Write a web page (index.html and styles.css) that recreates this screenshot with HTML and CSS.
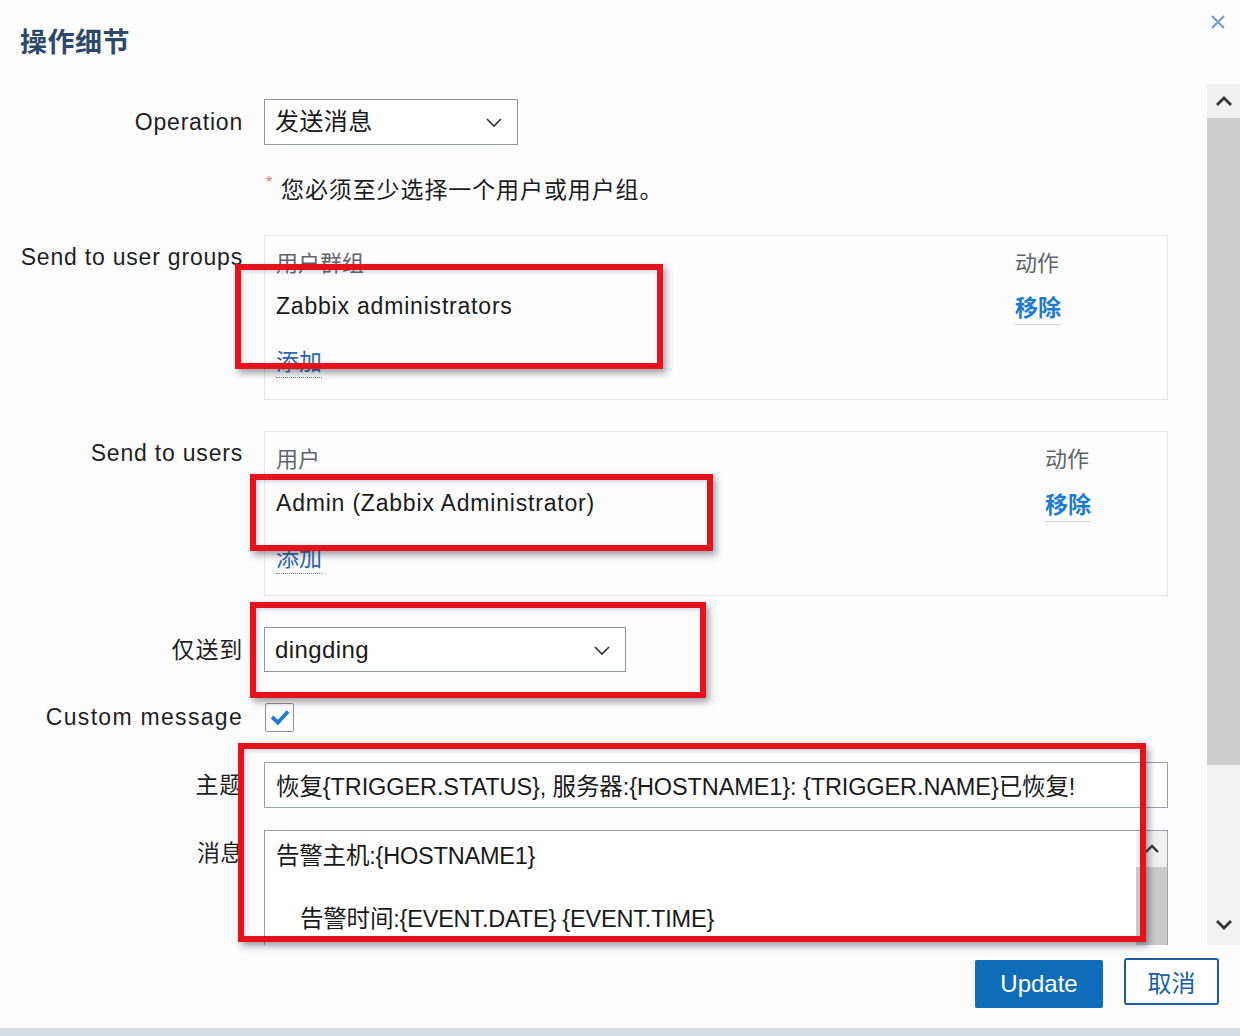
FILE: index.html
```html
<!DOCTYPE html>
<html lang="zh-CN">
<head>
<meta charset="utf-8">
<title>操作细节</title>
<link rel="stylesheet" href="styles.css">
</head>
<body>
<div class="dialog">
  <header class="header">
    <h1 class="title">操作细节</h1>
    <span class="close" aria-label="close">
      <svg width="16" height="16" viewBox="0 0 16 16"><path d="M2 2 L14 14 M14 2 L2 14" stroke="#7f9fc3" stroke-width="2.4" fill="none"/></svg>
    </span>
  </header>

  <div class="main">
    <div class="content">
      <div class="row row-op">
        <label class="lbl">Operation</label>
        <div class="select select-op">
          <span class="select-text">发送消息</span>
          <svg class="chev" width="18" height="12" viewBox="0 0 18 12"><path d="M2 3 L9 10 L16 3" stroke="#333" stroke-width="1.6" fill="none"/></svg>
        </div>
      </div>

      <div class="row row-err">
        <span></span>
        <div class="err"><span class="ast">*</span><span class="err-text">您必须至少选择一个用户或用户组。</span></div>
      </div>

      <div class="row row-table">
        <label class="lbl lbl-top">Send to user groups</label>
        <div class="tbl tbl-groups">
          <div class="th">用户群组</div><div class="th">动作</div>
          <div class="td">Zabbix administrators</div><div class="td"><a class="remove">移除</a></div>
          <div class="td add-cell"><a class="add">添加</a></div>
        </div>
      </div>

      <div class="row row-table row-users">
        <label class="lbl lbl-top">Send to users</label>
        <div class="tbl tbl-users">
          <div class="th">用户</div><div class="th">动作</div>
          <div class="td">Admin (Zabbix Administrator)</div><div class="td"><a class="remove">移除</a></div>
          <div class="td add-cell"><a class="add">添加</a></div>
        </div>
      </div>

      <div class="row row-only">
        <label class="lbl">仅送到</label>
        <div class="select select-only">
          <span class="select-text">dingding</span>
          <svg class="chev" width="18" height="12" viewBox="0 0 18 12"><path d="M2 3 L9 10 L16 3" stroke="#333" stroke-width="1.6" fill="none"/></svg>
        </div>
      </div>

      <div class="row row-check">
        <label class="lbl lbl-wide">Custom message</label>
        <div class="check">
          <svg width="22" height="18" viewBox="0 0 22 18"><path d="M3 9 L9 14.5 L19 3.5" stroke="#1f7ad6" stroke-width="3.8" fill="none" stroke-linejoin="miter"/></svg>
        </div>
      </div>

      <div class="row row-subject">
        <label class="lbl">主题</label>
        <div class="input">恢复{TRIGGER.STATUS}, 服务器:{HOSTNAME1}: {TRIGGER.NAME}已恢复!</div>
      </div>

      <div class="row row-msg">
        <label class="lbl lbl-msg">消息</label>
        <div class="textarea">
          <div class="ta-text">
            <div class="ta-line">告警主机:{HOSTNAME1}</div>
            <div class="ta-line">&nbsp;</div>
            <div class="ta-line ta-indent">告警时间:{EVENT.DATE} {EVENT.TIME}</div>
          </div>
          <div class="ta-scroll">
            <div class="ta-up">
              <svg width="16" height="10" viewBox="0 0 16 10"><path d="M2 8 L8 2 L14 8" stroke="#333" stroke-width="2.4" fill="none"/></svg>
            </div>
            <div class="ta-thumb"></div>
          </div>
        </div>
      </div>
    </div>

    <div class="vscroll">
      <div class="vs-up">
        <svg width="18" height="12" viewBox="0 0 18 12"><path d="M2 10 L9 3 L16 10" stroke="#333" stroke-width="2.8" fill="none"/></svg>
      </div>
      <div class="vs-thumb"></div>
      <div class="vs-track">
        <svg width="18" height="12" viewBox="0 0 18 12"><path d="M2 2 L9 9 L16 2" stroke="#333" stroke-width="2.8" fill="none"/></svg>
      </div>
    </div>
  </div>

  <footer class="footer">
    <button class="btn btn-primary">Update</button>
    <button class="btn btn-cancel">取消</button>
  </footer>
  <div class="strip"></div>

  <div class="annot annot-1"></div>
  <div class="annot annot-2"></div>
  <div class="annot annot-3"></div>
  <div class="annot annot-4"></div>
</div>
</body>
</html>
```

FILE: styles.css
```css
* { box-sizing: border-box; }

html, body {
  margin: 0;
  padding: 0;
}

body {
  background: #fdfdfe;
  color: #1c1c1c;
  font-family: "Liberation Sans", "Noto Sans CJK SC", sans-serif;
}

.dialog {
  position: relative;
  width: 1240px;
  height: 1036px;
  overflow: hidden;
  display: flex;
  flex-direction: column;
  background: #fdfdfe;
}

/* header */
.header {
  height: 84px;
  display: flex;
  justify-content: space-between;
  align-items: flex-start;
  padding: 0 14px 0 20px;
}

.title {
  margin: 23px 0 0 0;
  font-family: "Noto Sans CJK SC", sans-serif;
  font-size: 27px;
  line-height: 36px;
  font-weight: 700;
  color: #2d4868;
  letter-spacing: 0.5px;
}

.close {
  margin-top: 14px;
  display: block;
  width: 16px;
  height: 16px;
}

.close svg { display: block; }

/* main */
.main {
  height: 861px;
  display: flex;
}

.content {
  width: 1207px;
  overflow: hidden;
}

.row {
  display: grid;
  grid-template-columns: 243px auto;
  column-gap: 21px;
  align-items: center;
}

.lbl {
  text-align: right;
  font-size: 23px;
  line-height: 30px;
  letter-spacing: 0.8px;
  color: #1f1f1f;
  white-space: nowrap;
  font-family: "Liberation Sans", "Noto Sans CJK SC", sans-serif;
}

.lbl-wide { letter-spacing: 1.3px; }

.lbl-top {
  align-self: start;
  padding-top: 7px;
}

.lbl-msg {
  align-self: start;
  padding-top: 8px;
  letter-spacing: 0;
}

.row-op { margin-top: 15px; height: 46px; }
.row-err { margin-top: 25px; height: 36px; }
.row-table { margin-top: 29px; align-items: start; }
.row-users { margin-top: 31px; }
.row-only { margin-top: 31px; height: 45px; }
.row-check { margin-top: 30px; height: 29px; }
.row-subject { margin-top: 31px; height: 46px; }
.row-msg { margin-top: 22px; align-items: start; }

/* select */
.select {
  height: 100%;
  border: 1px solid #8e949b;
  background: #ffffff;
  display: flex;
  align-items: center;
  justify-content: space-between;
  padding: 0 14px 0 10px;
}

.select-op { width: 254px; }
.select-only { width: 362px; }

.select-text {
  font-size: 24px;
  line-height: 30px;
  letter-spacing: 0.4px;
  color: #1a1a1a;
}

.chev { display: block; }

/* error */
.err {
  display: flex;
  align-items: center;
  padding-left: 2px;
}

.ast {
  color: #ea7575;
  font-size: 16px;
  line-height: 16px;
  margin-top: -10px;
  width: 15px;
}

.err-text {
  font-family: "Noto Sans CJK SC", sans-serif;
  font-size: 23px;
  line-height: 32px;
  letter-spacing: 0.9px;
  color: #1c1c1c;
}

/* tables */
.tbl {
  width: 904px;
  height: 165px;
  border: 1px solid #e2e5e9;
  background: #fdfdfe;
  padding: 10px 12px 0 11px;
  display: grid;
  align-content: start;
  row-gap: 0;
}

.tbl-groups { grid-template-columns: 739px auto; grid-template-rows: 30px 32px 32px; }
.tbl-users { grid-template-columns: 769px auto; grid-template-rows: 30px 32px 32px; }

.tbl .th {
  font-family: "Noto Sans CJK SC", sans-serif;
  font-size: 22px;
  line-height: 30px;
  color: #5f656c;
}

.tbl .td {
  font-size: 23px;
  line-height: 32px;
  letter-spacing: 0.8px;
  color: #1a1a1a;
  margin-top: 14px;
}

.tbl-users .td { margin-top: 15px; }

.tbl .add-cell {
  grid-column: 1 / 3;
  margin-top: 36px;
}

.remove {
  font-family: "Noto Sans CJK SC", sans-serif;
  font-size: 23px;
  font-weight: 700;
  color: #1d7bd3;
  border-bottom: 1px solid #c9d5e2;
  letter-spacing: 0;
  padding-bottom: 1px;
}

.add {
  font-family: "Noto Sans CJK SC", sans-serif;
  font-size: 23px;
  color: #2a68b0;
  border-bottom: 1px dotted #6c7a8a;
  letter-spacing: 0;
}

/* checkbox */
.check {
  width: 29px;
  height: 29px;
  margin-left: 1px;
  border: 1px solid #8c929a;
  border-radius: 2px;
  background: #ffffff;
  display: flex;
  align-items: center;
  justify-content: center;
}

.check svg { display: block; }

/* subject input */
.input {
  width: 904px;
  height: 46px;
  border: 1px solid #9ba1a8;
  background: #ffffff;
  padding: 0 11px;
  display: flex;
  align-items: center;
  font-size: 23.5px;
  letter-spacing: -0.1px;
  color: #1a1a1a;
  white-space: nowrap;
  overflow: hidden;
}

/* textarea */
.textarea {
  width: 904px;
  height: 150px;
  border: 1px solid #9ba1a8;
  background: #ffffff;
  display: flex;
}

.ta-text {
  flex: 1;
  padding: 10px 11px 0 11px;
  font-size: 23.5px;
  letter-spacing: -0.2px;
  color: #1a1a1a;
}

.ta-line {
  line-height: 31.5px;
  white-space: nowrap;
}

.ta-indent { padding-left: 24px; }

.ta-scroll {
  width: 31px;
  display: flex;
  flex-direction: column;
}

.ta-up {
  height: 36px;
  background: #f0f0f0;
  display: flex;
  align-items: center;
  justify-content: center;
}

.ta-up svg { display: block; }

.ta-thumb {
  flex: 1;
  background: #c9c9c9;
}

/* outer scrollbar */
.vscroll {
  width: 33px;
  display: flex;
  flex-direction: column;
}

.vs-up {
  height: 34px;
  background: #f0f0f0;
  display: flex;
  align-items: center;
  justify-content: center;
}

.vs-thumb {
  height: 647px;
  background: #cdcdcd;
}

.vs-track {
  flex: 1;
  background: #f1f1f1;
  display: flex;
  align-items: flex-end;
  justify-content: center;
  padding-bottom: 14px;
}

.vscroll svg { display: block; }

/* footer */
.footer {
  height: 83px;
  display: flex;
  justify-content: flex-end;
  align-items: flex-start;
  gap: 21px;
  padding: 13px 21px 0 0;
}

.btn {
  font-size: 24px;
  line-height: 30px;
  cursor: pointer;
  border-radius: 2px;
}

.btn-primary {
  width: 128px;
  height: 48px;
  background: #0f6cb9;
  border: none;
  color: #ffffff;
  font-family: "Liberation Sans", sans-serif;
  margin-top: 2px;
}

.btn-cancel {
  width: 95px;
  height: 47px;
  background: #ffffff;
  border: 2px solid #1d5d9f;
  color: #1d5fa6;
  font-family: "Noto Sans CJK SC", sans-serif;
  border-radius: 3px;
}

.strip {
  height: 8px;
  background: #d7dce2;
}

/* red annotation rectangles drawn over the screenshot */
.annot {
  position: absolute;
  border: 6px solid #e5121c;
  box-shadow: 3px 4px 7px rgba(40, 40, 60, 0.45), inset 2px 2px 4px rgba(80, 90, 140, 0.25);
  pointer-events: none;
}

.annot-1 { left: 235px; top: 264px; width: 428px; height: 105px; }
.annot-2 { left: 250px; top: 474px; width: 463px; height: 77px; }
.annot-3 { left: 250px; top: 602px; width: 456px; height: 96px; }
.annot-4 { left: 238px; top: 743px; width: 908px; height: 199px; }
```
